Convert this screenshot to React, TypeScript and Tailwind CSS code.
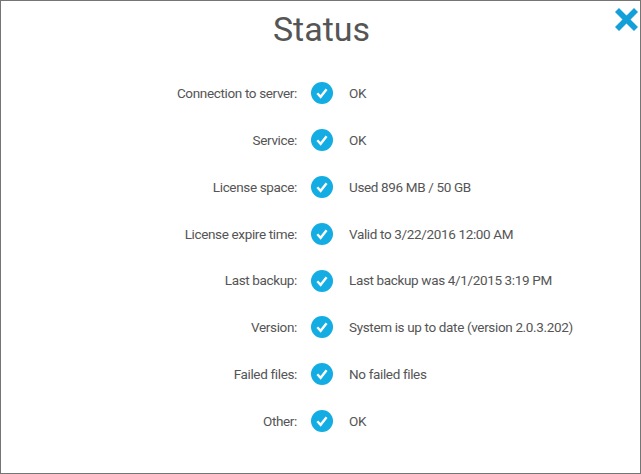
const rows = [
  { label: 'Connection to server:', value: 'OK' },
  { label: 'Service:', value: 'OK' },
  { label: 'License space:', value: 'Used 896 MB / 50 GB' },
  { label: 'License expire time:', value: 'Valid to 3/22/2016 12:00 AM' },
  { label: 'Last backup:', value: 'Last backup was 4/1/2015 3:19 PM' },
  { label: 'Version:', value: 'System is up to date (version 2.0.3.202)' },
  { label: 'Failed files:', value: 'No failed files' },
  { label: 'Other:', value: 'OK' },
]

function CheckBadge() {
  return (
    <svg width="22" height="22" viewBox="0 0 22 22" className="shrink-0">
      <circle cx="11" cy="11" r="11" fill="#13ace3" />
      <path d="M6.3 11.3 L9.6 14.8 L15.6 7.2" fill="none" stroke="#fff" strokeWidth="2.4" />
    </svg>
  )
}

export default function App() {
  return (
    <div className="relative flex h-[474px] w-[641px] flex-col border border-[#757575] bg-white font-['Roboto',sans-serif] text-[13.5px] tracking-[-0.35px] text-[#555555]">
      <h1 className="h-[69px] pl-[2px] pt-[6px] text-center text-[34px] leading-[44px] font-normal tracking-normal text-[#555555]">Status</h1>
      <button className="absolute top-[7px] right-[2px]">
        <svg width="23" height="23" viewBox="0 0 23 23" className="block">
          <path d="M4 0 L11.5 7.5 L19 0 L23 4 L15.5 11.5 L23 19 L19 23 L11.5 15.5 L4 23 L0 19 L7.5 11.5 L0 4 Z" fill="#139fd8" />
        </svg>
      </button>
      <div className="flex flex-col">
        {rows.map((row) => (
          <div key={row.label} className="flex h-[46.8px] items-center">
            <div className="w-[296px] text-right">{row.label}</div>
            <div className="ml-[14px] mr-[16px]"><CheckBadge /></div>
            <div>{row.value}</div>
          </div>
        ))}
      </div>
    </div>
  )
}
